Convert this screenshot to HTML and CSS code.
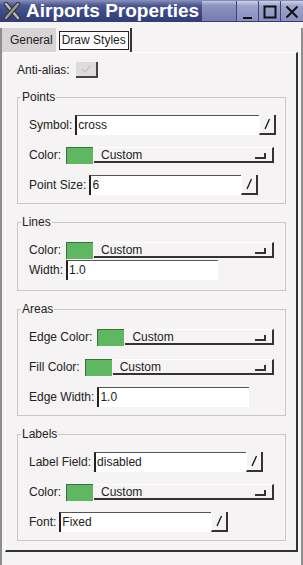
FILE: index.html
```html
<!DOCTYPE html>
<html lang="en">
<head>
    <meta charset="UTF-8">
    <meta name="viewport" content="width=device-width, initial-scale=1.0">
    <title>Airports Properties</title>
    <link rel="stylesheet" href="styles.css">
</head>
<body>
    <div class="window">
        <div class="titlebar">
            <svg class="app-icon" width="18" height="18" viewBox="0 0 18 18">
                <path d="M3 2 L15 16" stroke="#333" stroke-width="4.5" stroke-linecap="round"/>
                <path d="M3 2 L15 16" stroke="#b9b9b9" stroke-width="2.5" stroke-linecap="round"/>
                <path d="M15 2 L3 16" stroke="#333" stroke-width="4.5" stroke-linecap="round"/>
                <path d="M15 2 L3 16" stroke="#9a9a9a" stroke-width="2.5" stroke-linecap="round"/>
            </svg>
            <span class="title">Airports Properties</span>
            <span class="title-deco"></span>
            <span class="wm-btn">
                <svg width="12" height="12" viewBox="0 0 12 12"><path d="M1 11 H10" stroke="#111" stroke-width="2"/></svg>
            </span>
            <span class="wm-btn">
                <svg width="14" height="14" viewBox="0 0 14 14"><rect x="1.5" y="1.5" width="11" height="11" fill="none" stroke="#111" stroke-width="2"/></svg>
            </span>
            <span class="wm-btn">
                <svg width="14" height="14" viewBox="0 0 14 14"><path d="M1.5 1.5 L12.5 12.5 M12.5 1.5 L1.5 12.5" stroke="#111" stroke-width="2"/></svg>
            </span>
        </div>

        <div class="frame">
            <div class="tabs">
                <span class="tab">General</span>
                <span class="tab-active"><span>Draw Styles</span></span>
            </div>

            <div class="panel">
                <div class="antialias">
                    <span class="lbl">Anti-alias:</span>
                    <span class="check">
                        <svg width="10" height="8" viewBox="0 0 10 8"><path d="M1 4 L4 7 L9 1" fill="none" stroke="#c8c6c6" stroke-width="1.5"/></svg>
                    </span>
                </div>

                <fieldset class="group">
                    <legend>Points</legend>
                    <div class="row">
                        <span class="lbl">Symbol:</span>
                        <span class="entry grow">cross</span>
                        <span class="menubtn"><svg width="8" height="12" viewBox="0 0 8 12"><path d="M6.5 1 L2 11" stroke="#111" stroke-width="1.3"/></svg></span>
                    </div>
                    <div class="row">
                        <span class="lbl">Color:</span>
                        <span class="swatch"></span>
                        <span class="combo">Custom<span class="ind"></span></span>
                    </div>
                    <div class="row">
                        <span class="lbl">Point Size:</span>
                        <span class="entry fixed">6</span>
                        <span class="menubtn"><svg width="8" height="12" viewBox="0 0 8 12"><path d="M6.5 1 L2 11" stroke="#111" stroke-width="1.3"/></svg></span>
                    </div>
                </fieldset>

                <fieldset class="group tight">
                    <legend>Lines</legend>
                    <div class="row">
                        <span class="lbl">Color:</span>
                        <span class="swatch"></span>
                        <span class="combo">Custom<span class="ind"></span></span>
                    </div>
                    <div class="row">
                        <span class="lbl">Width:</span>
                        <span class="entry fixed">1.0</span>
                    </div>
                </fieldset>

                <fieldset class="group">
                    <legend>Areas</legend>
                    <div class="row">
                        <span class="lbl">Edge Color:</span>
                        <span class="swatch"></span>
                        <span class="combo">Custom<span class="ind"></span></span>
                    </div>
                    <div class="row">
                        <span class="lbl">Fill Color:</span>
                        <span class="swatch"></span>
                        <span class="combo">Custom<span class="ind"></span></span>
                    </div>
                    <div class="row">
                        <span class="lbl">Edge Width:</span>
                        <span class="entry fixed">1.0</span>
                    </div>
                </fieldset>

                <fieldset class="group">
                    <legend>Labels</legend>
                    <div class="row">
                        <span class="lbl">Label Field:</span>
                        <span class="entry fixed">disabled</span>
                        <span class="menubtn"><svg width="8" height="12" viewBox="0 0 8 12"><path d="M6.5 1 L2 11" stroke="#111" stroke-width="1.3"/></svg></span>
                    </div>
                    <div class="row">
                        <span class="lbl">Color:</span>
                        <span class="swatch"></span>
                        <span class="combo">Custom<span class="ind"></span></span>
                    </div>
                    <div class="row">
                        <span class="lbl">Font:</span>
                        <span class="entry fixed">Fixed</span>
                        <span class="menubtn"><svg width="8" height="12" viewBox="0 0 8 12"><path d="M6.5 1 L2 11" stroke="#111" stroke-width="1.3"/></svg></span>
                    </div>
                </fieldset>
            </div>
        </div>
    </div>
</body>
</html>
```

FILE: styles.css
```css
body {
    margin: 0;
    background: #f5f3f3;
    font-family: "Liberation Sans", Arial, sans-serif;
    font-size: 12px;
    color: #222;
}
.window {
    width: 303px;
    height: 565px;
}
.titlebar {
    height: 22px;
    display: flex;
    align-items: center;
    background: linear-gradient(to bottom, #8a91bd 0%, #4c5690 25%, #3a4480 70%, #333d77 100%);
}
.app-icon {
    margin: 0 5px 0 3px;
}
.title {
    color: #fff;
    font-weight: bold;
    font-size: 19px;
    white-space: nowrap;
}
.title-deco {
    flex: 1;
    height: 20px;
    margin-left: 3px;
    background: linear-gradient(to bottom, #c3c7e0 0%, #8e95c2 20%, #747cb0 100%);
    border-right: 1px solid #3a4480;
}
.wm-btn {
    width: 22px;
    height: 20px;
    display: flex;
    align-items: flex-end;
    justify-content: center;
    padding-bottom: 2px;
    box-sizing: border-box;
    background: linear-gradient(to bottom, #cdd0e4 0%, #9ca3cb 25%, #8990c0 100%);
    border-right: 1px solid #3a4480;
}
.wm-btn:last-child {
    border-right: none;
}
.frame {
    height: 543px;
    box-sizing: border-box;
    border: 2px solid #8e8e8e;
    border-top: none;
}
.tabs {
    display: flex;
    margin-top: 6px;
    height: 24px;
}
.tab {
    display: flex;
    align-items: center;
    padding: 0 3px 0 8px;
    background: #d6d4d4;
}
.tab-active {
    display: flex;
    align-items: center;
    margin-left: 3px;
    padding-right: 1px;
    border-right: 2px solid #333;
}
.tab-active span {
    background: #fff;
    border: 1px solid #222;
    padding: 0 2px;
    height: 17px;
    line-height: 17px;
}
.panel {
    margin: 0 3px;
    border-top: 1px solid #fff;
    border-left: 1px solid #fff;
    border-right: 2px solid #333;
    border-bottom: 2px solid #333;
    padding: 9px 10px 9px 11px;
}
.antialias {
    display: flex;
    align-items: center;
    height: 16px;
}
.check {
    width: 22px;
    height: 16px;
    box-sizing: border-box;
    margin-left: 3px;
    background: #dedbdb;
    border-right: 2px solid #444;
    border-bottom: 2px solid #444;
    display: flex;
    align-items: center;
    justify-content: center;
}
.group {
    margin: 12px 0 0;
    border: 1px solid #c9c6c6;
    padding: 11px 11px 8px 11px;
    min-width: 0;
}
.group + .group {
    margin-top: 11px;
}
.group legend {
    padding: 0 1px;
    margin-left: -8px;
    line-height: 14px;
}
.row {
    display: flex;
    align-items: center;
    height: 20px;
}
.row + .row {
    margin-top: 10px;
}
.tight .row + .row {
    margin-top: 0;
}
.tight {
    padding-bottom: 10px;
}
.lbl {
    white-space: nowrap;
    margin-right: 3px;
}
.entry {
    height: 20px;
    box-sizing: border-box;
    background: #fff;
    border-top: 1px solid #555;
    border-left: 2px solid #222;
    padding-left: 1px;
    line-height: 19px;
}
.grow {
    flex: 1;
}
.fixed {
    width: 152px;
}
.menubtn {
    width: 17px;
    height: 20px;
    box-sizing: border-box;
    border-left: 1px solid #fff;
    border-right: 2px solid #333;
    border-bottom: 2px solid #333;
    display: flex;
    align-items: center;
    justify-content: center;
}
.row .grow + .menubtn {
    margin-right: -2px;
}
.swatch {
    width: 27px;
    height: 17px;
    box-sizing: border-box;
    margin-left: 2px;
    background: #5fb861;
    border-top: 1px solid #3d6e3f;
    border-left: 1px solid #3d6e3f;
}
.combo {
    flex: 1;
    height: 16px;
    box-sizing: border-box;
    margin-left: 1px;
    padding: 0 6px 0 7px;
    border-top: 1px solid #fff;
    border-right: 2px solid #333;
    border-bottom: 2px solid #333;
    display: flex;
    align-items: center;
    justify-content: space-between;
    line-height: 12px;
}
.ind {
    width: 9px;
    height: 4px;
    border-right: 2px solid #333;
    border-bottom: 2px solid #333;
    margin-top: 2px;
}
```
